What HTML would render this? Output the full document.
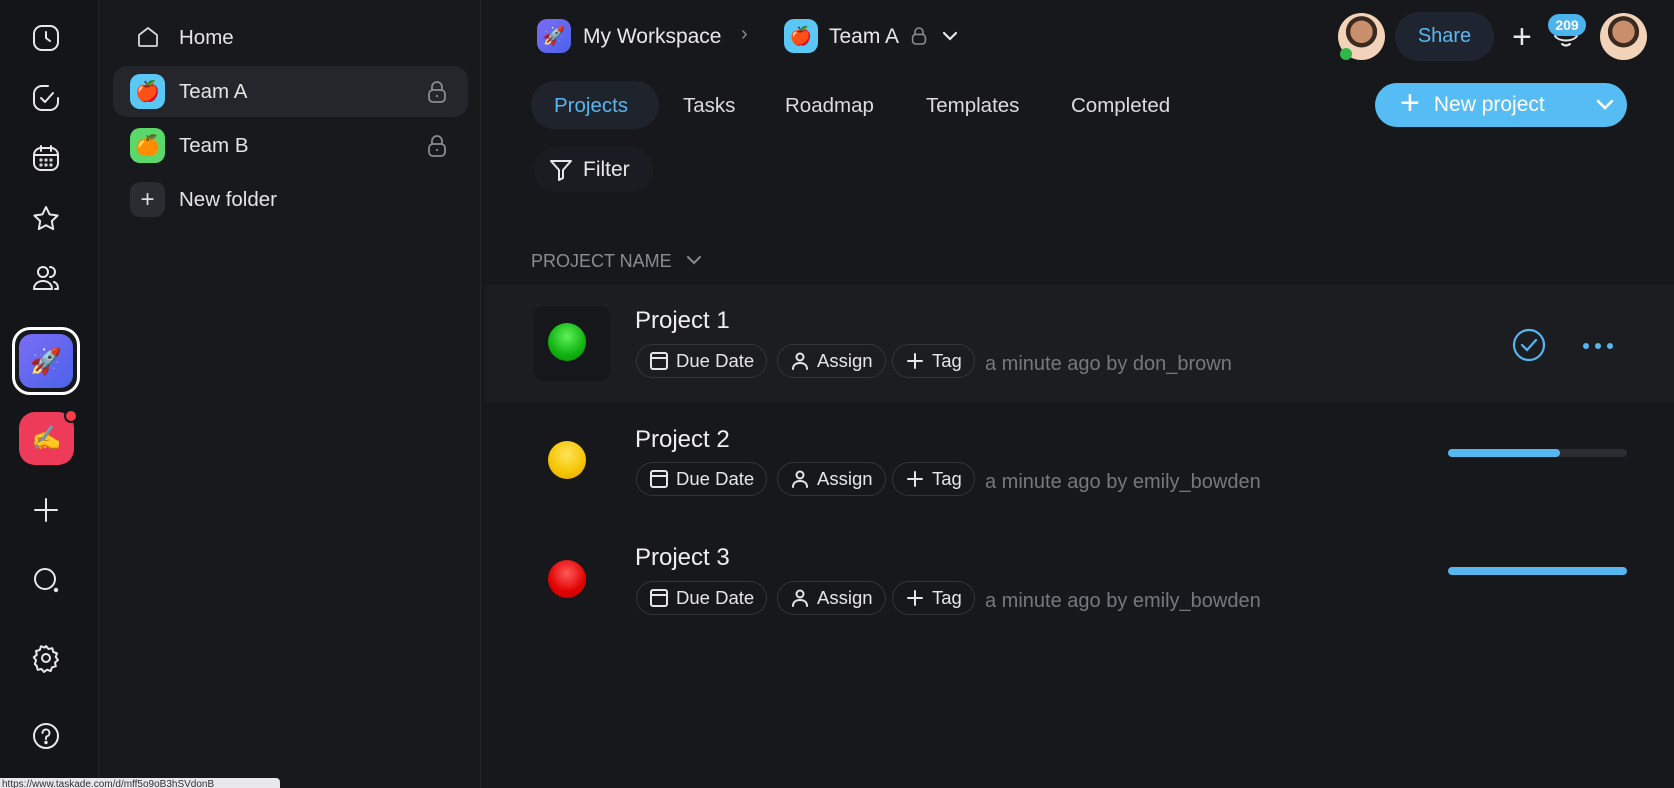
<!DOCTYPE html>
<html><head><meta charset="utf-8"><style>
*{box-sizing:border-box;margin:0;padding:0}
body{width:1674px;height:788px;overflow:hidden;background:#17181c;font-family:"Liberation Sans","Noto Sans CJK SC",sans-serif;color:#e8e8ea;position:relative}
.abs{position:absolute}
.rail{left:0;top:0;width:99px;height:788px;background:#141519;border-right:1px solid #222328}
.side{left:99px;top:0;width:382px;height:788px;background:#18191d;border-right:1px solid #25262b}
.ic{position:absolute;width:30px;height:30px;left:31px}
.ic svg{width:30px;height:30px;stroke:#e8e8ea;fill:none;stroke-width:2;stroke-linecap:round;stroke-linejoin:round}
.emo{display:flex;align-items:center;justify-content:center;border-radius:10px;font-size:20px}
.stxt{font-size:20.5px;color:#e4e4e6}
.tab{position:absolute;top:94px;font-size:20.5px;color:#dcdcdf}
.chip{position:absolute;height:34px;border:1px solid #34353b;border-radius:17px;display:flex;align-items:center;padding:0 12px 0 12px;font-size:18.5px;color:#e6e6e8;gap:7px}
.chip svg{width:20px;height:20px;stroke:#e6e6e8;fill:none;stroke-width:2;stroke-linecap:round}
.title{position:absolute;left:635px;font-size:24px;color:#efeff1}
.meta{position:absolute;left:985px;font-size:20px;color:#77787d}
.dot{position:absolute;left:548px;width:38px;height:38px;border-radius:50%}
.avatar{position:absolute;width:47px;height:47px;border-radius:50%;background:radial-gradient(circle at 50% 40%,#c98e6c 0 30%,#3b2a20 31% 42%,#f2d2b8 43%);overflow:hidden}
</style></head><body>
<div class="abs rail"></div>
<div class="abs side"></div>

<div class="ic" style="top:23px"><svg viewBox="0 0 30 30"><rect x="3" y="3" width="24" height="24" rx="8"/><path d="M15 9v6l4 3"/></svg></div>
<div class="ic" style="top:83px"><svg viewBox="0 0 30 30"><path d="M27 15v4a8 8 0 0 1-8 8h-8a8 8 0 0 1-8-8v-8a8 8 0 0 1 8-8h6"/><path d="M10 15l4 4 8-9"/></svg></div>
<div class="ic" style="top:143px"><svg viewBox="0 0 30 30"><rect x="3" y="5" width="24" height="22" rx="7"/><path d="M3 12h24M10 3v5M20 3v5"/><circle cx="10" cy="17" r=".6"/><circle cx="15" cy="17" r=".6"/><circle cx="20" cy="17" r=".6"/><circle cx="10" cy="22" r=".6"/><circle cx="15" cy="22" r=".6"/><circle cx="20" cy="22" r=".6"/></svg></div>
<div class="ic" style="top:204px"><svg viewBox="0 0 30 30"><path d="M15 3l3.6 7.4 8 1.1-5.8 5.6 1.4 8L15 21.3 7.8 25.1l1.4-8L3.4 11.5l8-1.1z"/></svg></div>
<div class="ic" style="top:263px"><svg viewBox="0 0 30 30"><circle cx="12" cy="9" r="5"/><path d="M3 26c0-5 4-8 9-8s9 3 9 8H3z"/><path d="M19 4a5 5 0 0 1 0 10M23 19c3 1 4 3 4 7h-3"/></svg></div>
<div class="abs" style="left:12px;top:327px;width:68px;height:68px;border-radius:18px;border:3px solid #fff;background:#17181c;padding:4px"><div style="width:100%;height:100%;border-radius:13px;background:linear-gradient(135deg,#7b6cf6,#4b63e8);display:flex;align-items:center;justify-content:center;font-size:26px">🚀</div></div>
<div class="abs emo" style="left:19px;top:412px;width:55px;height:53px;border-radius:16px;background:#ef3b5a;font-size:24px">✍️</div>
<div class="abs" style="left:64px;top:409px;width:14px;height:14px;border-radius:50%;background:#ff3b47;border:2px solid #141519"></div>
<div class="ic" style="top:495px"><svg viewBox="0 0 30 30"><path d="M15 4v22M4 15h22"/></svg></div>
<div class="ic" style="top:565px"><svg viewBox="0 0 30 30"><circle cx="14" cy="14" r="10"/><circle cx="25" cy="25" r="1.2" fill="#e8e8ea"/></svg></div>
<div class="ic" style="top:643px"><svg viewBox="0 0 30 30"><circle cx="15" cy="15" r="4"/><path d="M15 3l2.5 3 3.8-.8 1 3.8 3.7 1.3-1.3 3.7 2.3 3-3 2.5.8 3.8-3.8 1-1.3 3.7-3.7-1.3-3 2.3-2.5-3-3.8.8-1-3.8L3.8 21l1.3-3.7L2.8 14.3l3-2.5L5 8l3.8-1L10 3.3l3.7 1.3z"/></svg></div>
<div class="ic" style="top:721px"><svg viewBox="0 0 30 30"><circle cx="15" cy="15" r="12"/><path d="M11.5 12a3.5 3.5 0 1 1 4.5 3.3c-.7.3-1 .8-1 1.7v1"/><circle cx="15" cy="21.5" r=".7" fill="#e8e8ea"/></svg></div>

<div class="abs" style="left:136px;top:25px"><svg width="24" height="24" viewBox="0 0 24 24" fill="none" stroke="#d8d8da" stroke-width="1.8" stroke-linejoin="round"><path d="M3 10l9-7 9 7v10a1 1 0 0 1-1 1H4a1 1 0 0 1-1-1z"/></svg></div>
<div class="abs stxt" style="left:179px;top:26px">Home</div>
<div class="abs" style="left:113px;top:66px;width:355px;height:51px;border-radius:14px;background:#24262b"></div>
<div class="abs emo" style="left:130px;top:74px;width:35px;height:35px;background:#5ac8f5">🍎</div>
<div class="abs stxt" style="left:179px;top:80px">Team A</div>
<div class="abs emo" style="left:130px;top:128px;width:35px;height:35px;background:#5bd86a">🍊</div>
<div class="abs stxt" style="left:179px;top:134px">Team B</div>
<div class="abs emo" style="left:130px;top:182px;width:35px;height:35px;background:#2b2c31;color:#ddd;font-size:24px">+</div>
<div class="abs stxt" style="left:179px;top:188px">New folder</div>
<svg class="abs" style="left:427px;top:80px" width="20" height="24" viewBox="0 0 20 24" fill="none" stroke="#8a8b90" stroke-width="1.8"><path d="M5 10V7a5 5 0 0 1 10 0v3"/><rect x="2" y="10" width="16" height="12" rx="4"/><path d="M10 15v2"/></svg>
<svg class="abs" style="left:427px;top:134px" width="20" height="24" viewBox="0 0 20 24" fill="none" stroke="#8a8b90" stroke-width="1.8"><path d="M5 10V7a5 5 0 0 1 10 0v3"/><rect x="2" y="10" width="16" height="12" rx="4"/><path d="M10 15v2"/></svg>

<div class="abs emo" style="left:537px;top:19px;width:34px;height:34px;background:linear-gradient(135deg,#7b6cf6,#4b63e8);font-size:18px">🚀</div>
<div class="abs" style="left:583px;top:25px;font-size:21px">My Workspace</div>
<div class="abs" style="left:741px;top:23px;font-size:20px;color:#8a8b90">›</div>
<div class="abs emo" style="left:784px;top:19px;width:34px;height:34px;background:#5ac8f5;font-size:18px">🍎</div>
<div class="abs" style="left:829px;top:25px;font-size:21px">Team A</div>
<svg class="abs" style="left:911px;top:26px" width="16" height="20" viewBox="0 0 20 24" fill="none" stroke="#8a8b90" stroke-width="2"><path d="M5 10V7a5 5 0 0 1 10 0v3"/><rect x="2" y="10" width="16" height="12" rx="4"/></svg>
<svg class="abs" style="left:941px;top:29px" width="18" height="14" viewBox="0 0 18 14" fill="none" stroke="#e8e8ea" stroke-width="2.2" stroke-linecap="round"><path d="M3 4l6 6 6-6"/></svg>

<div class="avatar" style="left:1338px;top:13px"></div>
<div class="abs" style="left:1340px;top:48px;width:12px;height:12px;border-radius:50%;background:#2fb84a"></div>
<div class="abs" style="left:1395px;top:12px;width:99px;height:49px;border-radius:25px;background:#1f2530;color:#5ab8ee;font-size:20px;display:flex;align-items:center;justify-content:center">Share</div>
<div class="abs" style="left:1512px;top:18px;font-size:34px;color:#e8e8ea;font-weight:300">+</div>
<svg class="abs" style="left:1552px;top:28px" width="28" height="22" viewBox="0 0 28 22" fill="none" stroke="#e8e8ea" stroke-width="2" stroke-linecap="round"><path d="M3 8c4 6 18 6 22 0M10 16c3 2 5 2 8 0"/></svg>
<div class="abs" style="left:1548px;top:14px;width:38px;height:22px;border-radius:11px;background:#4ab4ee;color:#fff;font-size:14px;font-weight:bold;display:flex;align-items:center;justify-content:center">209</div>
<div class="avatar" style="left:1600px;top:13px"></div>

<div class="abs" style="left:531px;top:81px;width:128px;height:48px;border-radius:24px;background:#1f232b"></div>
<div class="tab" style="left:554px;color:#56b6f0">Projects</div>
<div class="tab" style="left:683px">Tasks</div>
<div class="tab" style="left:785px">Roadmap</div>
<div class="tab" style="left:926px">Templates</div>
<div class="tab" style="left:1071px">Completed</div>
<div class="abs" style="left:1375px;top:83px;width:252px;height:44px;border-radius:22px;background:#55bdf4;color:#fff;font-size:21px;display:flex;align-items:center;padding-left:25px">
<span style="font-size:34px;font-weight:300;margin-right:14px;margin-top:-3px">+</span>New project</div>
<svg class="abs" style="left:1595px;top:98px" width="20" height="14" viewBox="0 0 20 14" fill="none" stroke="#fff" stroke-width="2.6" stroke-linecap="round"><path d="M3 3l7 7 7-7"/></svg>

<div class="abs" style="left:534px;top:147px;width:119px;height:45px;border-radius:22px;background:#1b1c21;display:flex;align-items:center;padding-left:14px;font-size:21px;gap:9px">
<svg width="26" height="26" viewBox="0 0 26 26" fill="none" stroke="#e8e8ea" stroke-width="2" stroke-linejoin="round"><path d="M3 4h20l-8 9v8l-4 2V13z"/></svg>Filter</div>

<div class="abs" style="left:531px;top:251px;font-size:18px;color:#8b8c91">PROJECT NAME</div>
<svg class="abs" style="left:686px;top:254px" width="16" height="12" viewBox="0 0 16 12" fill="none" stroke="#8b8c91" stroke-width="2" stroke-linecap="round"><path d="M2 3l6 6 6-6"/></svg>

<div class="abs" style="left:485px;top:285px;width:1189px;height:117px;background:#1c1d21"></div>
<div class="abs" style="left:534px;top:306px;width:76px;height:75px;border-radius:10px;background:#16171a"></div>

<div class="dot" style="top:323px;background:radial-gradient(circle at 50% 35%,#5ef05a,#0fb20f 60%,#0a8a0a)"></div>
<div class="title" style="top:307px">Project 1</div>
<div class="chip" style="left:636px;top:344px"><svg viewBox="0 0 20 20"><rect x="2" y="2" width="16" height="16" rx="2"/><path d="M2 7h16"/></svg>Due Date</div>
<div class="chip" style="left:777px;top:344px"><svg viewBox="0 0 20 20"><circle cx="10" cy="6" r="3.5"/><path d="M3 18c0-4 3-6 7-6s7 2 7 6"/></svg>Assign</div>
<div class="chip" style="left:892px;top:344px"><svg viewBox="0 0 20 20"><path d="M10 3v14M3 10h14"/></svg>Tag</div>
<div class="meta" style="top:353px">a minute ago by don_brown</div>
<svg class="abs" style="left:1511px;top:327px" width="36" height="36" viewBox="0 0 36 36" fill="none" stroke="#56b6f0" stroke-width="2.2" stroke-linecap="round"><circle cx="18" cy="18" r="15"/><path d="M11 18l5 5 9-10"/></svg>
<div class="abs" style="left:1583px;top:343px;width:30px;height:6px;display:flex;justify-content:space-between"><i style="width:6px;height:6px;border-radius:50%;background:#56b6f0"></i><i style="width:6px;height:6px;border-radius:50%;background:#56b6f0"></i><i style="width:6px;height:6px;border-radius:50%;background:#56b6f0"></i></div>

<div class="dot" style="top:441px;background:radial-gradient(circle at 50% 35%,#ffe45a,#f5c400 60%,#d9a800)"></div>
<div class="title" style="top:426px">Project 2</div>
<div class="chip" style="left:636px;top:462px"><svg viewBox="0 0 20 20"><rect x="2" y="2" width="16" height="16" rx="2"/><path d="M2 7h16"/></svg>Due Date</div>
<div class="chip" style="left:777px;top:462px"><svg viewBox="0 0 20 20"><circle cx="10" cy="6" r="3.5"/><path d="M3 18c0-4 3-6 7-6s7 2 7 6"/></svg>Assign</div>
<div class="chip" style="left:892px;top:462px"><svg viewBox="0 0 20 20"><path d="M10 3v14M3 10h14"/></svg>Tag</div>
<div class="meta" style="top:471px">a minute ago by emily_bowden</div>
<div class="abs" style="left:1448px;top:449px;width:179px;height:8px;border-radius:4px;background:#2c2d32"><div style="width:112px;height:8px;border-radius:4px;background:#56b6f0"></div></div>

<div class="dot" style="top:560px;background:radial-gradient(circle at 50% 35%,#ff5a5a,#e00000 60%,#b00000)"></div>
<div class="title" style="top:544px">Project 3</div>
<div class="chip" style="left:636px;top:581px"><svg viewBox="0 0 20 20"><rect x="2" y="2" width="16" height="16" rx="2"/><path d="M2 7h16"/></svg>Due Date</div>
<div class="chip" style="left:777px;top:581px"><svg viewBox="0 0 20 20"><circle cx="10" cy="6" r="3.5"/><path d="M3 18c0-4 3-6 7-6s7 2 7 6"/></svg>Assign</div>
<div class="chip" style="left:892px;top:581px"><svg viewBox="0 0 20 20"><path d="M10 3v14M3 10h14"/></svg>Tag</div>
<div class="meta" style="top:590px">a minute ago by emily_bowden</div>
<div class="abs" style="left:1448px;top:567px;width:179px;height:8px;border-radius:4px;background:#56b6f0"></div>

<div class="abs" style="left:0;top:778px;width:280px;height:10px;background:#e8e8ea;border-top-right-radius:4px;font-size:10px;color:#333;overflow:hidden;line-height:14px;padding-left:2px">https://www.taskade.com/d/mff5o9oB3hSVdonB</div>
</body></html>
